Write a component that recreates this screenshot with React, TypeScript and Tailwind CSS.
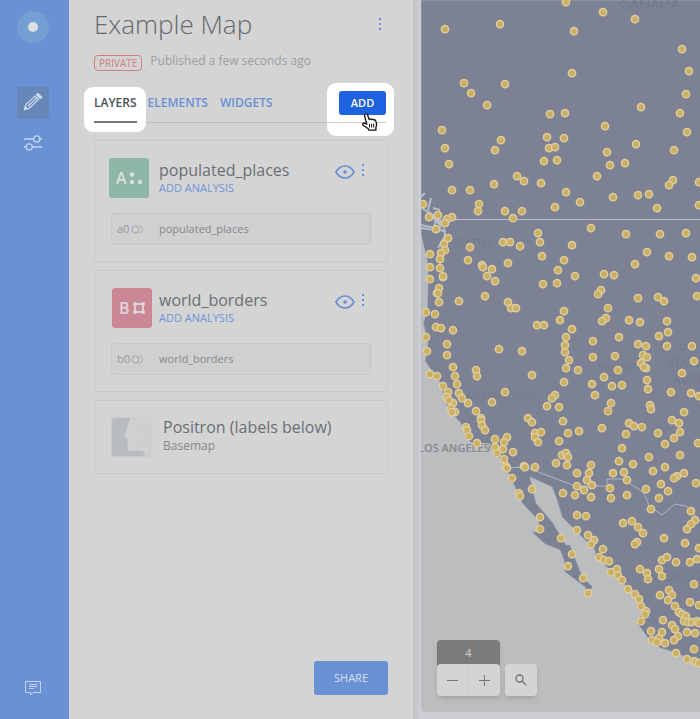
import React from "react";

const FONT = "font-['Open_Sans','Noto_Sans',sans-serif]";

const PLACES: number[][] = [
  [566,2],[603,12],[635,19],[445,29],[500,24],[574,31],[682,49],[689,71],[572,73],[464,83],[505,84],[471,93],[686,94],[487,105],[641,107],[550,114],[565,113],[680,113],[605,126],[442,130],[547,137],[564,138],[687,132],[501,140],[445,148],[495,150],[549,148],[555,147],[636,144],[607,152],[674,150],[449,164],[544,161],[557,160],[610,165],[625,163],
  [517,176],[524,181],[541,183],[494,184],[597,176],[673,180],[669,185],[699,182],[452,190],[470,190],[566,192],[580,202],[613,197],[638,195],[649,194],[479,204],[478,211],[505,211],[522,211],[513,218],[555,207],[657,208],[699,205],[423,204],[429,217],[438,215],[452,217],[447,219],[445,223],[436,229],[591,228],[538,233],[626,234],[660,234],[686,233],[448,238],[444,244],[445,250],[441,253],[430,254],[440,259],[470,247],[503,242],[510,242],[520,246],[540,242],[572,245],[542,256],[647,252],[669,256],[692,257],[468,260],[508,263],[564,260],[635,264],[430,267],[440,268],[482,265],[483,267],[492,269],[487,276],[495,281],[558,270],[575,276],[604,274],[614,275],[696,278],[430,279],[443,277],[443,276],[543,284],[557,283],[439,288],[437,293],[438,293],[439,302],[485,296],[459,301],[601,290],[598,294],[638,298],[658,297],[664,301],[697,296],[508,302],[511,308],[516,308],[608,308],[426,312],[435,314],[564,311],[560,320],[606,318],[602,321],[629,320],[640,322],[667,321],[436,327],[441,328],[453,330],[537,325],[544,325],[572,329],[668,332],[659,336],[426,337],[566,337],[565,345],[593,341],[619,337],[447,344],[638,344],[646,346],[667,346],[692,346],
  [427,351],[447,355],[499,349],[522,351],[565,352],[593,357],[615,356],[643,355],[647,357],[641,363],[646,368],[644,367],[694,361],[569,360],[566,368],[578,370],[453,367],[430,374],[437,376],[455,376],[476,370],[477,376],[532,375],[618,370],[682,373],[604,377],[564,382],[457,384],[443,386],[448,392],[447,397],[505,392],[459,393],[462,398],[468,403],[453,403],[451,408],[455,412],[452,412],[449,400],[492,402],[555,395],[552,398],[547,406],[559,407],[592,384],[612,386],[622,385],[647,380],[648,389],[595,395],[671,392],[691,393],[699,396],[611,403],[608,411],[650,405],[651,409],[684,412],[476,411],[481,418],[481,420],[482,425],[485,430],[528,418],[532,422],[563,421],[672,420],[679,423],[629,423],[634,426],[642,427],[602,428],[579,431],[568,433],[626,434],[658,433],[680,432],[674,438],[665,444],[698,443],[466,427],[467,430],[469,436],[535,433],[541,432],[535,437],[538,442],[559,441],[507,437],[495,439],[504,442],[477,443],[495,447],[503,449],[497,453],[513,452],[622,448],[680,455],[649,457],[562,455],[566,453],[568,457],[504,459],[556,463],[567,465],[619,461],[633,464],[591,465],[524,466],[525,467],[535,467],[506,466],[507,468],[665,467],[653,471],[684,473],[577,473],[589,473],[613,473],[624,472],[677,476],[674,478],[587,480],[627,480],[512,478],[577,486],[592,485],[661,484],[696,483],
  [610,488],[532,489],[584,490],[646,489],[668,491],[563,493],[519,493],[520,496],[575,495],[591,497],[611,498],[627,495],[659,498],[651,509],[691,511],[540,517],[577,515],[586,516],[695,520],[691,524],[687,529],[623,523],[632,521],[638,527],[643,533],[540,529],[577,530],[588,535],[594,540],[591,544],[561,538],[637,542],[635,544],[664,538],[685,543],[699,548],[603,549],[572,554],[599,557],[604,560],[609,561],[568,566],[662,560],[667,557],[676,562],[690,562],[697,559],[611,572],[617,569],[618,575],[622,580],[640,569],[647,573],[648,579],[659,569],[662,576],[583,578],[588,593],[694,584],[628,589],[635,594],[669,590],[660,595],[672,595],
  [668,600],[690,602],[699,605],[639,599],[641,606],[646,611],[645,614],[641,621],[675,606],[679,612],[682,614],[686,616],[684,621],[688,622],[692,622],[697,621],[699,623],[663,620],[672,625],[675,629],[651,631],[662,632],[687,632],[695,633],[678,636],[659,638],[674,640],[652,640],[657,642],[665,643],[694,649],[676,653],[687,659],[694,661],[696,662],[699,663],
];

const LAND =
  "M421 0H720V670L700 664L677 653L660 648L648 638L637 623L642 612L637 597L627 587L610 570L595 556L595 550L577 532L562 517L557 500L552 487L530 477L536 503L553 523L566 545L570 545L577 563L583 578L593 587L587 592L585 587L565 572L564 560L560 550L545 544L532 532L540 532L538 520L522 503L515 487L507 470L498 456L488 447L473 444L468 440L460 422L448 410L443 393L440 382L430 368L425 361L428 343L423 322L427 310L428 280L427 260L421 235Z";

function MapCanvas() {
  return (
    <svg
      className="absolute inset-0 h-full w-full"
      viewBox="421 0 279 712"
      preserveAspectRatio="xMinYMin slice"
      role="img"
      aria-label="Map of populated places"
    >
      <path d={LAND} fill="#7c8294" stroke="#a9b2bd" strokeWidth="0.7" />
      <path d="M421 235L427 260L428 280L427 310L424 322L421 318Z" fill="#b6bbc0" />
      <path
        d="M421 225L435 228L446 232M421 228L440 231M421 207L430 214L437 218L441 228M428 210L431 198M433 208L440 210M444 228L445 236L438 248M434 219L445 226M421 197L425 193M436 221L434 226"
        fill="none" stroke="#b3bcc7" strokeWidth="2"
      />
      <path d="M427 209L432 213L441 219L444 226L437 224L431 216Z" fill="#b3bcc7" />
      <g fontSize="10" fill="#747a8a" fontFamily="Open Sans, Noto Sans, sans-serif">
        <text x="620" y="9" fontSize="15">CANADA</text>
        <text x="454" y="247">SEATTLE</text>
        <text x="460" y="399">SAN FRANCISCO</text>
        <text x="597" y="371">DENVER</text>
        <text x="678" y="350" fontSize="12">UNITED</text>
        <text x="667" y="367" fontSize="12">STATES OF</text>
        <text x="673" y="384" fontSize="12">AMERICA</text>
        <text x="649" y="581" fontSize="14">MEXICO</text>
      </g>
      <text x="418" y="452" fontSize="11" fontWeight="600" fill="#85888c" stroke="#bbbdbf" strokeWidth="2" paintOrder="stroke" fontFamily="Open Sans, Noto Sans, sans-serif">
        LOS ANGELES
      </text>
      <g fill="none" stroke="#b1b7c4" strokeWidth="1">
        <path d="M452 219.500H720" stroke="#b9bcc8" />
        <path d="M507 468L525 467L533 470L575 486H607V479H623L640 490L645 495L649 506L662 515L675 504L686 506L691 511L700 521" />
      </g>
      <g fill="#ccb062" stroke="#ddcca0" strokeWidth="1.500">
        {PLACES.map(([x, y], i) => (
          <circle key={i} cx={x} cy={y + 0.2} r="3.600" />
        ))}
      </g>
    </svg>
  );
}

function Dots({ label }: { label: string }) {
  return (
    <button aria-label={label} className="flex h-4 w-2 flex-col items-center justify-between py-0.5">
      <span className="size-0.5 bg-[#6a91d4]" />
      <span className="size-0.5 bg-[#6a91d4]" />
      <span className="size-0.5 bg-[#6a91d4]" />
    </button>
  );
}

function EyeButton({ label }: { label: string }) {
  return (
    <button aria-label={label}>
      <svg width="20" height="14" viewBox="0 0 20 14" fill="none" stroke="#6a91d4" strokeWidth="1.700">
        <path d="M1 7C5.500-1 14.500-1 19 7C14.500 15 5.500 15 1 7Z" />
        <circle cx="10" cy="7" r="1.800" fill="#6a91d4" stroke="none" />
      </svg>
    </button>
  );
}

type LayerProps = { name: string; node: string; badge: React.ReactNode; align: string };

function LayerCard({ name, node, badge, align }: LayerProps) {
  return (
    <li className="rounded-[3px] border border-[#c9c9c9] pr-4 pb-4 pl-4">
      <div className="-ml-0.5 flex pt-[17px]">
        <div className={"flex w-[43px] shrink-0 " + align}>{badge}</div>
        <div className="ml-[7px] min-w-0 flex-1">
          <h2 className="truncate text-base leading-6 text-[#6b6f73]">{name}</h2>
          <button className="block text-[11px] leading-3 text-[#6f95d4]">ADD ANALYSIS</button>
        </div>
        <div className="mr-1 flex h-7 items-center gap-1">
          <EyeButton label={"Toggle " + name} />
          <div className="pb-1"><Dots label={"Options for " + name} /></div>
        </div>
      </div>
      <div className="mt-[15px] flex h-8 items-center rounded border border-[#c8c8c8] bg-[#d0d0d0] text-[11px] text-[#85898c]">
        <span className="ml-[5px] w-[14px] text-[#96999b]">{node}</span>
        <svg width="13" height="9" viewBox="0 0 13 9" fill="none" stroke="#a0a3a5">
          <circle cx="4.500" cy="4.500" r="3.500" />
          <path d="M8.500 1C12.500 1.500 12.500 7.500 8.500 8" />
        </svg>
        <span className="ml-[15px]">{name}</span>
      </div>
    </li>
  );
}

function BadgeA() {
  return (
    <svg width="40" height="40" className="rounded-[3px] bg-[#8fb7a8]" fill="#d9e0dd">
      <text x="7" y="26" fontSize="16" fontWeight="600" fontFamily="Open Sans, sans-serif">A</text>
      <circle cx="23" cy="16.500" r="2.200" /><circle cx="23" cy="24" r="2.200" /><circle cx="31" cy="24" r="2.200" />
    </svg>
  );
}

function BadgeB() {
  return (
    <svg width="40" height="40" className="rounded-[3px] bg-[#cc8797]" fill="#e0d5d8">
      <text x="7" y="26" fontSize="16" fontWeight="600" fontFamily="Open Sans, sans-serif">B</text>
      <rect x="23" y="16" width="8" height="8" fill="none" stroke="#e0d5d8" strokeWidth="1.800" />
      <circle cx="23" cy="16" r="2" /><circle cx="31" cy="16" r="2" /><circle cx="23" cy="24" r="2" /><circle cx="31" cy="24" r="2" />
    </svg>
  );
}

function BasemapThumb() {
  return (
    <svg width="40" height="40" viewBox="0 0 40 40" className="rounded border border-[#cacaca] bg-[#b9bcbf]">
      <path d="M19 0H40V40H35L33 35L25 34L17 35L16 22L13 19L16 11Z" fill="#d0d0d0" />
      <path d="M21 5L26 7M28 9L35 10L38 17M30 18L37 20M20 28L29 27M31 25L38 31" stroke="#c8c9ca" fill="none" />
    </svg>
  );
}

function Sidebar() {
  return (
    <nav aria-label="Main" className="flex w-[69px] shrink-0 flex-col items-center bg-[#6a91d4] pt-[11px] pr-1 pb-[15px]">
      <button aria-label="Account" className="flex size-8 items-center justify-center rounded-full bg-[#739fd2]">
        <span className="size-2.5 rounded-full bg-[#dcdfe1]" />
      </button>
      <button aria-label="Edit" className="mt-11 flex size-8 items-center justify-center rounded-[3px] bg-[#6787b8]">
        <svg width="20" height="20" viewBox="0 0 20 20" fill="none" stroke="#cddbed" strokeWidth="1.200">
          <path d="M1.500 16.500L3 11.500L12 3L15.500 6.500L6.500 15Z" />
          <path d="M5 13.200L13.500 5" />
          <path d="M13.500 1.700L15 .6L18.700 4.200L17.300 5.400Z" fill="#cddbed" />
          <path d="M1.500 16.500L2.200 14L4.200 15.800Z" fill="#cddbed" />
        </svg>
      </button>
      <button aria-label="Settings" className="mt-2 flex size-8 items-center justify-center">
        <svg width="18" height="16" viewBox="0 0 18 16" fill="none" stroke="#c3d3ee" strokeWidth="1.300">
          <path d="M0 4H9.500M16 4H18M0 12H2M8.500 12H18" />
          <circle cx="12.700" cy="4" r="3.100" /><circle cx="5.200" cy="12" r="3.100" />
        </svg>
      </button>
      <button aria-label="Feedback" className="mt-auto flex size-8 items-center justify-center">
        <svg width="16" height="15" viewBox="0 0 16 15" fill="none" stroke="#c3d3ee">
          <path d="M.5.500H15.500V11.500H8L5.500 14V11.500H.5Z" />
          <path d="M4 3.500H12M4 5.500H12M4 7.500H9" />
        </svg>
      </button>
    </nav>
  );
}

function HandCursor() {
  return (
    <svg className="pointer-events-none" width="18" height="19" viewBox="0 0 18 19">
      <path
        d="M4.500 1C5.600.6 6.300 1.200 6.600 2L8.200 6.500C8.700 5.700 9.900 5.700 10.300 6.600C10.900 5.900 12 6 12.500 7C13.300 6.500 14.400 6.900 14.700 8C15.500 10 16.200 11.800 14.900 14.500V17.200H8L7.300 15.700L2.200 12.200C.9 11.200 2.200 9.500 3.600 10.200L5.800 11.200L3.600 3C3.300 2 3.700 1.300 4.500 1Z"
        fill="#fff" stroke="#111" strokeWidth="1.300" strokeLinejoin="round"
      />
      <path d="M8.500 11V14.500M10.600 10.800V14.500M12.700 10.500V14.500" stroke="#111" strokeWidth="1" />
    </svg>
  );
}

function Panel() {
  return (
    <aside className="flex w-[344px] shrink-0 flex-col bg-[#d4d4d4] px-[25px] pt-1 pb-6">
      <header>
        <div className="flex items-center justify-between">
          <h1 className="text-[26px] leading-10 font-light text-[#64686c]">Example Map</h1>
          <div className="mr-1"><Dots label="Map options" /></div>
        </div>
        <div className="mt-[7px] flex h-5 items-center">
          <span className="mt-1 rounded-sm border border-[#cf7f7f] px-1 text-[10px] leading-[14px] text-[#cf7f7f]">PRIVATE</span>
          <span className="ml-2 text-xs leading-5 text-[#9c9ea0]">Published a few seconds ago</span>
        </div>
      </header>
      <div className="mt-3 flex h-10 border-b border-[#bcbcbc] text-xs font-semibold text-[#6a91d4]">
        <div className="relative">
          <div className="absolute top-1 -left-[10px] h-[45px] w-[62px] rounded-[9px] bg-white" />
          <button className="relative h-10 border-b-2 border-[#777] pt-px text-[#4b5054]">LAYERS</button>
        </div>
        <button className="relative ml-[11px] h-10">ELEMENTS</button>
        <button className="ml-3 h-10">WIDGETS</button>
        <div className="relative ml-auto w-[49px] pt-2">
          <div className="absolute top-0 -right-[6px] h-[53px] w-[67px] rounded-[9px] bg-white" />
          <div className="absolute top-[39px] right-0.5 h-px w-[59px] bg-[#ccc]" />
          <button className="relative h-6 w-[47px] rounded-[3px] bg-[#1f62df] text-[11px] text-white">ADD</button>
          <div className="absolute top-[30px] left-[22px]"><HandCursor /></div>
        </div>
      </div>
      <ul className="mt-[17px] flex flex-col gap-2">
        <LayerCard name="populated_places" node="a0" badge={<BadgeA />} align="justify-start" />
        <LayerCard name="world_borders" node="b0" badge={<BadgeB />} align="justify-end" />
        <li className="flex items-start rounded-[3px] border border-[#c9c9c9] py-4 pl-4">
          <BasemapThumb />
          <div className="ml-3">
            <h2 className="text-base leading-5 text-[#6b6f73]">Positron (labels below)</h2>
            <p className="text-xs leading-[18px] text-[#85898c]">Basemap</p>
          </div>
        </li>
      </ul>
      <button className="mt-auto h-[34px] w-[74px] self-end rounded-[3px] bg-[#6a91d4] text-[11px] text-[#d6e0ef]">SHARE</button>
    </aside>
  );
}

function MapControls() {
  return (
    <div className="absolute bottom-4 left-4 flex items-end gap-[5px]">
      <div className="w-[63px] rounded shadow-md">
        <div className="h-7 rounded-t bg-[#7b7b7b] text-center text-[11px] leading-[26px] text-[#d0d0d0]">4</div>
        <div className="-mt-1 flex h-8 overflow-hidden rounded bg-[#d4d4d4]">
          <button aria-label="Zoom out" className="flex flex-1 items-center justify-center border-r border-[#cacaca]">
            <svg width="11" height="11" stroke="#777"><path d="M0 5.500H11" /></svg>
          </button>
          <button aria-label="Zoom in" className="flex flex-1 items-center justify-center">
            <svg width="11" height="11" stroke="#777"><path d="M0 5.500H11M5.500 0V11" /></svg>
          </button>
        </div>
      </div>
      <button aria-label="Search" className="flex size-8 items-center justify-center rounded bg-[#d4d4d4] shadow-md">
        <svg width="12" height="12" viewBox="0 0 12 12" fill="none" stroke="#777" strokeWidth="1.400">
          <circle cx="4.500" cy="4.500" r="3.500" /><path d="M7 7L11.200 11.200" />
        </svg>
      </button>
    </div>
  );
}

export default function App() {
  return (
    <div className={"flex min-h-screen bg-[#cdcfd2] " + FONT}>
      <Sidebar />
      <Panel />
      <main className="flex min-w-0 flex-1 bg-linear-to-r from-[#bfc1c4] to-[#cdcfd2] to-[8px] pb-[7px] pl-2">
        <section aria-label="Map" className="relative flex-1 overflow-hidden rounded-bl bg-[#bbbdbf]">
          <MapCanvas />
          <MapControls />
        </section>
      </main>
    </div>
  );
}
